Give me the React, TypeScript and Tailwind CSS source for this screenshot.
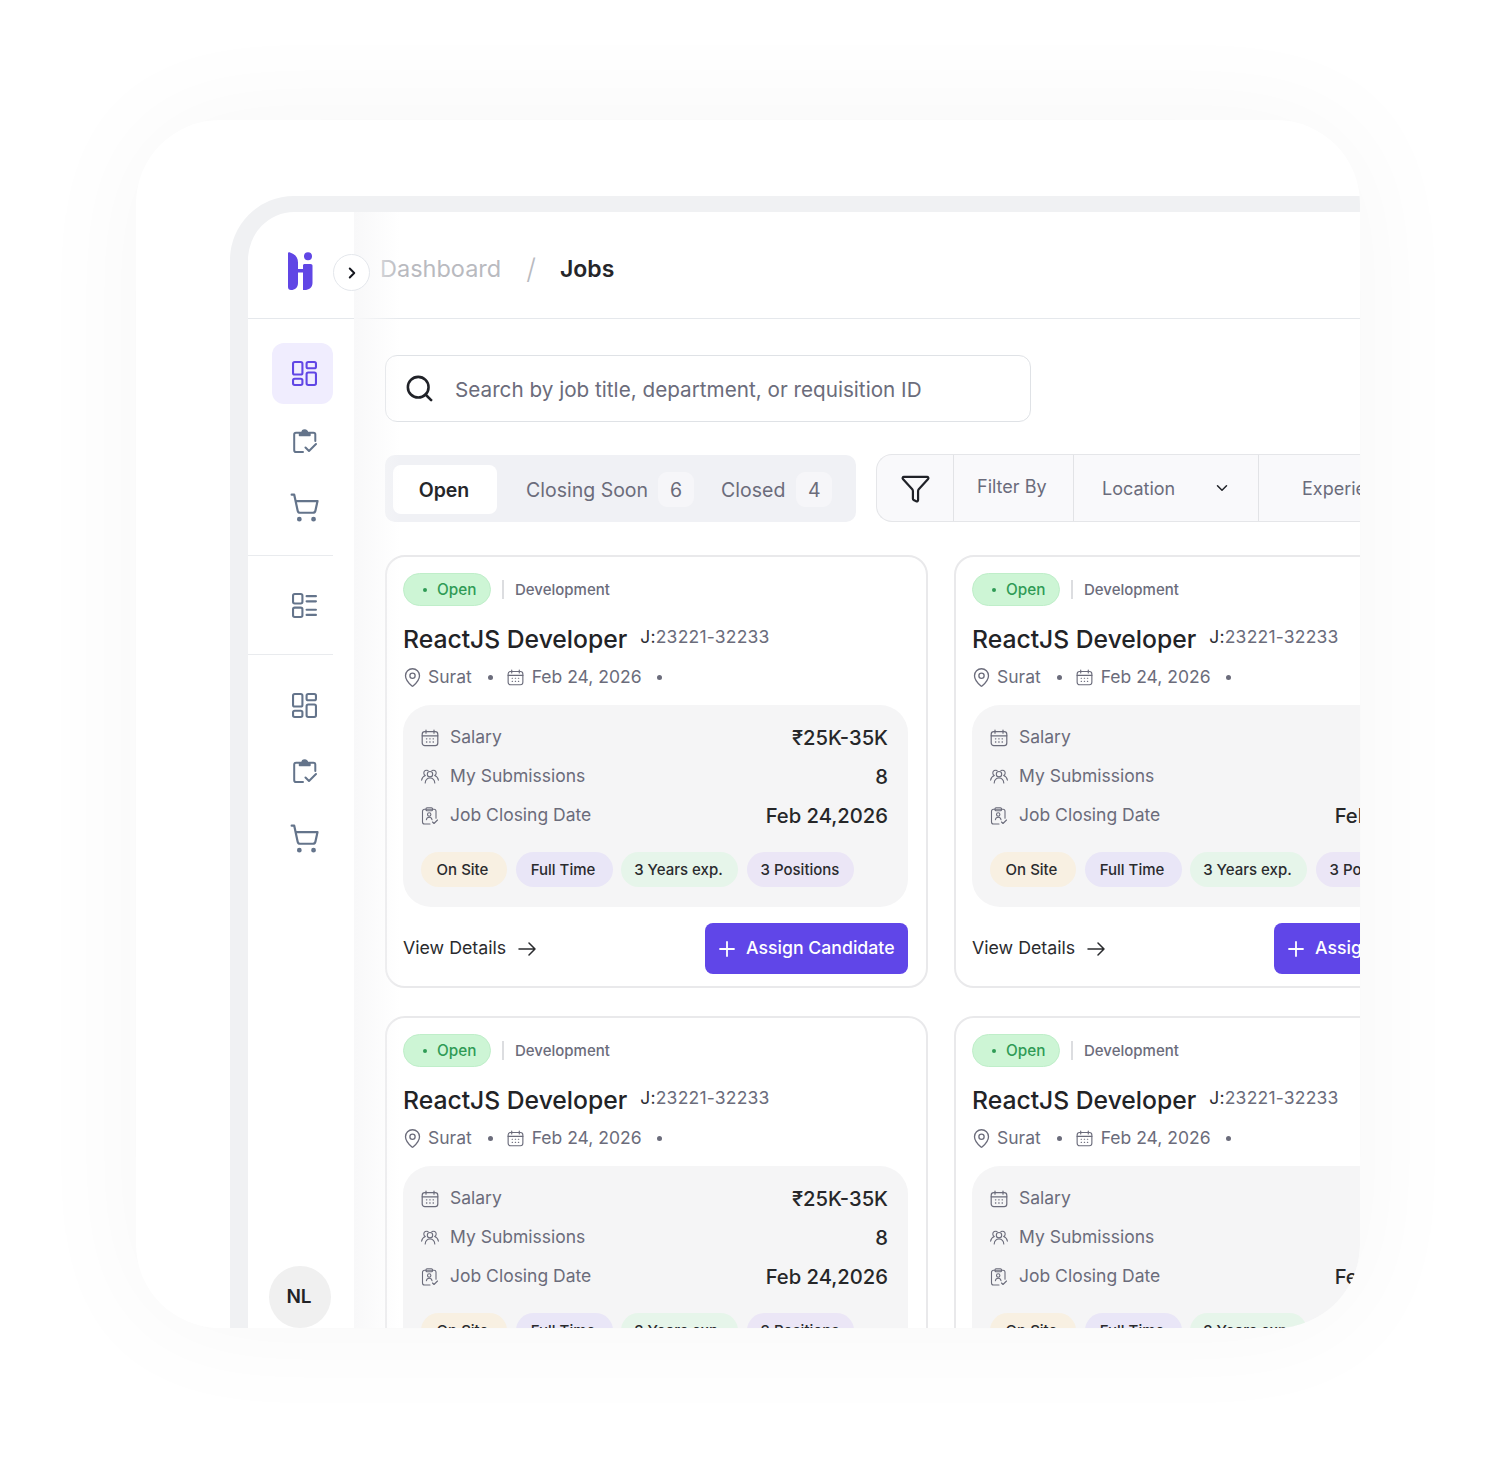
import { ChevronDown, ChevronRight, Funnel, MapPin, Search, ShoppingCart } from "lucide-react";

const chips = [
  { label: "On Site", className: "w-[86px] bg-[#f8f0e2] pr-[3px]" },
  { label: "Full Time", className: "w-[97px] bg-[#e9e6f7] pr-[2px]" },
  { label: "3 Years exp.", className: "w-[117px] bg-[#e6f5ea] pr-[2px]" },
  { label: "3 Positions", className: "w-[107px] bg-[#ebe6f6]" },
];

function GridIcon({ className }: { className?: string }) {
  return (
    <svg viewBox="0 0 24 24" fill="none" stroke="currentColor" strokeWidth="2" className={className}>
      <rect x="1" y="1" width="9" height="12" rx="1.600" />
      <rect x="14" y="1" width="9" height="6" rx="1.600" />
      <rect x="14" y="11" width="9" height="12" rx="1.600" />
      <rect x="1" y="17" width="9" height="6" rx="1.600" />
    </svg>
  );
}

function ListIcon({ className }: { className?: string }) {
  return (
    <svg viewBox="0 0 24 24" fill="none" stroke="currentColor" strokeWidth="2" strokeLinecap="round" className={className}>
      <rect x="1" y="1" width="9" height="9" rx="1.600" />
      <rect x="1" y="14" width="9" height="9" rx="1.600" />
      <path d="M14 3h9M14 8h9M14 16h9M14 21h9" />
    </svg>
  );
}

function TaskIcon({ className }: { className?: string }) {
  return (
    <svg viewBox="0 0 24 24" fill="none" stroke="currentColor" strokeWidth="2" strokeLinecap="round" strokeLinejoin="round" className={className}>
      <path d="M10 23H3A1.800 1.800 0 0 1 1.200 21.200V5.500A1.800 1.800 0 0 1 3 3.700H20.500A1.800 1.800 0 0 1 22.300 5.500V12" />
      <path d="M6.500 3.700V6.500H17V3.700H14.500A2.700 2.700 0 0 0 9 3.700Z" fill="currentColor" strokeWidth="1.400" />
      <path d="m12.500 18.500 3.500 3.500 7-7" />
    </svg>
  );
}

function CalendarIcon({ className }: { className?: string }) {
  return (
    <svg viewBox="0 0 18 18" fill="none" stroke="currentColor" strokeWidth="1.200" strokeLinecap="round" className={className}>
      <rect x="1.200" y="2.700" width="15.600" height="14" rx="2.600" />
      <path d="M5 1v3.200M13 1v3.200M1.200 6.800h15.600" />
      <path d="M5.500 9.800h.3M8.800 9.800h.3M12.100 9.800h.3M5.500 13h.3M8.800 13h.3M12.100 13h.3" strokeWidth="1.300" />
    </svg>
  );
}

function PeopleIcon({ className }: { className?: string }) {
  return (
    <svg viewBox="0 0 18 15" fill="none" stroke="currentColor" strokeWidth="1.100" strokeLinecap="round" strokeLinejoin="round" className={className}>
      <circle cx="9" cy="5.200" r="2.700" />
      <path d="M4.200 14c.3-3.300 2.200-5 4.800-5s4.500 1.700 4.800 5" />
      <path d="M7 1.600A2.800 2.800 0 0 0 2.800 4c0 1.100.6 2.100 1.500 2.600C2.300 7.400 1 9 .6 11.200" />
      <path d="M11 1.600A2.800 2.800 0 0 1 15.200 4c0 1.100-.6 2.100-1.500 2.600 2 .8 3.300 2.400 3.700 4.600" />
    </svg>
  );
}

function ClipboardPersonIcon({ className }: { className?: string }) {
  return (
    <svg viewBox="0 0 18 18" fill="none" stroke="currentColor" strokeWidth="1.100" strokeLinecap="round" strokeLinejoin="round" className={className}>
      <path d="M9 17H3.500a2 2 0 0 1-2-2V4.300a2 2 0 0 1 2-2h9.500a2 2 0 0 1 2 2v7" />
      <rect x="5" y="0.800" width="6.500" height="3" rx="1" />
      <circle cx="8.200" cy="7.500" r="1.700" />
      <path d="M5.400 12.800c.2-1.700 1.300-2.600 2.800-2.600s2.600.9 2.800 2.600" />
      <path d="m11.500 15 1.500 1.500 3.500-3.500" />
    </svg>
  );
}

function ArrowIcon() {
  return (
    <svg viewBox="0 0 18 14" fill="none" stroke="currentColor" strokeWidth="1.500" strokeLinecap="round" strokeLinejoin="round" className="ml-[12px] h-[14px] w-[18px]">
      <path d="M1 7h16M11 1l6 6-6 6" />
    </svg>
  );
}

function PlusIcon() {
  return (
    <svg viewBox="0 0 16 16" fill="none" stroke="currentColor" strokeWidth="1.800" strokeLinecap="round" className="h-[16px] w-[16px]">
      <path d="M8 1v14M1 8h14" />
    </svg>
  );
}

function Logo() {
  return (
    <svg viewBox="0 0 25 38" className="h-[38px] w-[25px]" fill="#6046e5">
      <path d="M0 1.500C0 .3 1 0 2 .4 7 2.200 10 5 10 10.500V17H15V13.500C15 12.500 15.800 12 16.500 12H22.500C23.800 12 24.500 12.700 24.500 13.800V31C24.500 35.500 21 38 16.500 38H15V20.500H10V31C10 35.500 7 38 3 38 1 38 0 37 0 35Z" />
      <circle cx="20" cy="4.200" r="4" />
    </svg>
  );
}

function JobCard() {
  return (
    <article className="w-[543px] rounded-[20px] border-2 border-[#e9e9eb] bg-white pt-[16px] pr-[18px] pb-[12px] pl-[16px]">
      <div className="flex h-[33px] items-center">
        <span className="flex h-[33px] w-[88px] items-center rounded-full border border-[#bfeec9] bg-[#cdf5d5] pt-[1px] pl-[19px] text-[15.300px] font-medium text-[#2f9b55]">
          <span className="mr-[10px] h-[4px] w-[4px] rounded-full bg-[#2f9b55]" />
          Open
        </span>
        <span className="ml-[11px] h-[19px] w-[2px] bg-[#dcdde0]" />
        <span className="mt-[1px] ml-[11px] text-[15px] font-medium text-[#6b6c7b]">Development</span>
      </div>

      <div className="mt-[17px] flex h-[32px] items-center">
        <h2 className="text-[24.700px] font-medium leading-[32px] text-[#222326]">ReactJS Developer</h2>
        <span className="mb-[3px] ml-[13px] text-[17.500px] tracking-[0.2px] text-[#6b6c7b]">
          <span className="text-[#2c2d33]">J:</span>23221-32233
        </span>
      </div>

      <div className="mt-[6px] flex h-[32px] items-center text-[17.500px] text-[#6b6c7b]">
        <MapPin className="-ml-[1px] h-[21px] w-[21px]" strokeWidth={1.500} />
        <span className="ml-[5px]">Surat</span>
        <span className="ml-[16px] h-[5px] w-[5px] rounded-full bg-[#6b6c7b]" />
        <CalendarIcon className="ml-[14px] h-[17px] w-[17px]" />
        <span className="ml-[8px]">Feb 24, 2026</span>
        <span className="ml-[15px] h-[5px] w-[5px] rounded-full bg-[#6b6c7b]" />
      </div>

      <div className="mt-[12px] rounded-[28px] bg-[#f5f5f6] pt-[13px] pr-[20px] pb-[20px] pl-[18px]">
        <div className="flex h-[39px] items-center text-[17.500px] text-[#6b6c7b]">
          <CalendarIcon className="h-[18px] w-[18px]" />
          <span className="ml-[11px]">Salary</span>
          <span className="mt-[2px] ml-auto text-[20.200px] font-medium text-[#262729]">₹25K-35K</span>
        </div>
        <div className="flex h-[39px] items-center text-[17.500px] text-[#6b6c7b]">
          <PeopleIcon className="h-[15px] w-[18px]" />
          <span className="ml-[11px]">My Submissions</span>
          <span className="mt-[2px] ml-auto text-[20.200px] font-medium text-[#262729]">8</span>
        </div>
        <div className="flex h-[39px] items-center text-[17.500px] text-[#6b6c7b]">
          <ClipboardPersonIcon className="h-[18px] w-[18px]" />
          <span className="ml-[11px]">Job Closing Date</span>
          <span className="mt-[2px] ml-auto text-[20.200px] font-medium text-[#262729]">Feb 24,2026</span>
        </div>
        <div className="mt-[17px] flex gap-[8.500px]">
          {chips.map((chip) => (
            <span
              key={chip.label}
              className={`flex h-[35px] flex-none items-center justify-center rounded-full pt-[1px] text-[15px] font-medium text-[#2a2b2e] ${chip.className}`}
            >
              {chip.label}
            </span>
          ))}
        </div>
      </div>

      <div className="mt-[16px] flex items-center justify-between">
        <span className="flex items-center text-[17.800px] text-[#2a2b2e]">
          View Details
          <ArrowIcon />
        </span>
        <button className="flex h-[51px] w-[203px] items-center gap-[11px] rounded-[8px] bg-[#6046e8] pl-[14px] text-[17.700px] font-medium text-white">
          <PlusIcon />
          Assign Candidate
        </button>
      </div>
    </article>
  );
}

export default function App() {
  return (
    <div className="h-[1480px] w-[1496px] overflow-hidden bg-white font-['Inter',sans-serif] pt-[120px] pl-[136px]">
      <div className="h-[1208px] w-[1224px] overflow-hidden rounded-[84px] bg-white pt-[76px] pl-[94px] shadow-[0_0_120px_0_rgba(0,0,0,0.04)]">
        <div className="relative flex h-[1300px] w-[1400px] rounded-tl-[64px] border-t-[16px] border-l-[18px] border-[#f0f1f3] bg-white">
          {/* sidebar */}
          <aside className="w-[106px] flex-none">
            <div className="flex h-[107px] items-center border-b border-[#e5e8ec] pt-[12px] pl-[40px]">
              <Logo />
            </div>
            <nav className="flex flex-col">
              <div className="mt-[24px] ml-[24px] flex w-[61px] flex-col gap-[6px] text-[#64748b]">
                <span className="flex h-[61px] w-[61px] items-center justify-center rounded-[12px] bg-[#f0edfe] pl-[4px] text-[#6046e5]">
                  <GridIcon className="h-[25px] w-[25px]" />
                </span>
                <span className="flex h-[61px] w-[61px] items-center justify-center pl-[4px]">
                  <TaskIcon className="h-[24px] w-[24px]" />
                </span>
                <span className="flex h-[61px] w-[61px] items-center justify-center pl-[4px]">
                  <ShoppingCart className="h-[31px] w-[31px]" strokeWidth={1.700} />
                </span>
              </div>
              <div className="mt-[17px] w-[85px] border-b border-[#e9ebee]" />
              <div className="flex h-[98px] w-[85px] items-center pt-[1px] pl-[24px] text-[#64748b]">
                <span className="flex w-[61px] justify-center pl-[4px]">
                  <ListIcon className="h-[25px] w-[25px]" />
                </span>
              </div>
              <div className="w-[85px] border-b border-[#e9ebee]" />
              <div className="ml-[24px] flex w-[61px] flex-col items-center gap-[41px] pt-[38px] pl-[4px] text-[#64748b]">
                <GridIcon className="h-[25px] w-[25px]" />
                <TaskIcon className="h-[24px] w-[24px]" />
                <ShoppingCart className="-mt-[1px] h-[31px] w-[31px]" strokeWidth={1.700} />
              </div>
              <div className="mt-[412px] ml-[21px] flex h-[62px] w-[62px] flex-none items-center justify-center rounded-full bg-[#f0f0f0] pr-[2px] text-[19px] font-semibold text-[#222326]">
                NL
              </div>
            </nav>
          </aside>

          {/* soft edge of the sidebar */}
          <div className="pointer-events-none absolute top-0 bottom-0 left-[106px] z-10 w-[46px] bg-gradient-to-r from-[#f8f8f9] to-transparent" />

          <button className="absolute top-[42px] left-[85px] z-20 flex h-[37px] w-[37px] items-center justify-center rounded-full border border-[#e4e7ec] bg-white text-[#15171f]">
            <ChevronRight className="h-[18px] w-[18px]" strokeWidth={2.600} />
          </button>

          <main className="min-w-0 flex-1">
            <header className="flex h-[107px] items-center border-b border-[#e5e8ec] pt-[7px] pl-[26px] text-[23.500px] leading-[30px]">
              <span className="text-[#b9babf]">Dashboard</span>
              <span className="ml-[25px] text-[28px] font-light text-[#b9babf]">/</span>
              <span className="ml-[24px] text-[23px] font-semibold text-[#25262a]">Jobs</span>
            </header>

            <div className="pt-[36px] pl-[31px]">
              <div className="flex h-[67px] w-[646px] items-center rounded-[12px] border border-[#dfe2e6] pl-[18px]">
                <Search className="h-[31px] w-[31px] text-[#202228]" strokeWidth={2} />
                <span className="mt-[2px] ml-[20px] text-[20.700px] text-[#6b6c7b]">Search by job title, department, or requisition ID</span>
              </div>

              <div className="mt-[33px] flex items-start">
                <div className="flex h-[67px] w-[471px] flex-none items-center rounded-[10px] bg-[#f0f1f5] pt-[2px] pl-[8px] text-[19.500px] text-[#6b6c7b]">
                  <span className="flex h-[49px] w-[104px] items-center justify-center rounded-[8px] bg-white pt-[2px] pr-[2px] font-semibold text-[#25262a]">Open</span>
                  <span className="mt-[2px] ml-[29px]">Closing Soon</span>
                  <span className="ml-[10px] flex h-[35px] w-[36px] items-center justify-center rounded-[9px] bg-[#f6f6f9] pt-[2px]">6</span>
                  <span className="mt-[2px] ml-[27px]">Closed</span>
                  <span className="ml-[11px] flex h-[35px] w-[36px] items-center justify-center rounded-[9px] bg-[#f6f6f9] pt-[2px]">4</span>
                </div>

                <div className="-mt-px ml-[20px] flex h-[68px] w-[700px] flex-none rounded-l-[16px] border border-r-0 border-[#e5e6e9] bg-[#f9f9fb] text-[18px] text-[#6b6c7b]">
                  <span className="flex w-[77px] items-center justify-center border-r border-[#e2e3e6]">
                    <Funnel className="h-[31px] w-[31px] text-[#202228]" strokeWidth={1.700} />
                  </span>
                  <span className="flex w-[120px] items-center border-r border-[#e2e3e6] pb-[4px] pl-[23px]">Filter By</span>
                  <span className="flex w-[185px] items-center border-r border-[#e2e3e6] pl-[28px]">
                    Location
                    <ChevronDown className="ml-[38px] h-[18px] w-[18px] text-[#202228]" strokeWidth={2} />
                  </span>
                  <span className="flex items-center pl-[43px]">Experience</span>
                </div>
              </div>

              <div className="mt-[33px] grid grid-cols-[543px_543px] gap-x-[26px] gap-y-[28px]">
                <JobCard />
                <JobCard />
                <JobCard />
                <JobCard />
              </div>
            </div>
          </main>
        </div>
      </div>
    </div>
  );
}
